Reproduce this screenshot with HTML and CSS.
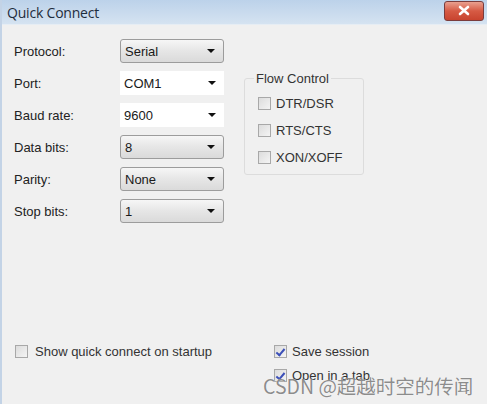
FILE: index.html
```html
<!DOCTYPE html>
<html lang="en">
<head>
	<meta charset="UTF-8" />
	<title>Quick Connect</title>
	<link rel="stylesheet" href="styles.css">
</head>
<body>
	<div class="window">
		<div class="titlebar">
			<span class="title">Quick Connect</span>
			<div class="close">
				<svg width="14" height="11" viewBox="0 0 14 11"><path d="M3 2 L11 9 M11 2 L3 9" stroke="#fff" stroke-width="2.6" stroke-linecap="round"/></svg>
			</div>
		</div>

		<div class="content">
			<div class="top">
				<div class="fields">
					<label>Protocol:</label>
					<div class="combo boxed">Serial<span class="arrow"></span></div>

					<label>Port:</label>
					<div class="combo">COM1<span class="arrow"></span></div>

					<label>Baud rate:</label>
					<div class="combo">9600<span class="arrow"></span></div>

					<label>Data bits:</label>
					<div class="combo boxed">8<span class="arrow"></span></div>

					<label>Parity:</label>
					<div class="combo boxed">None<span class="arrow"></span></div>

					<label>Stop bits:</label>
					<div class="combo boxed">1<span class="arrow"></span></div>
				</div>

				<fieldset class="flow">
					<legend>Flow Control</legend>
					<div class="check-row"><span class="box"></span>DTR/DSR</div>
					<div class="check-row"><span class="box"></span>RTS/CTS</div>
					<div class="check-row"><span class="box"></span>XON/XOFF</div>
				</fieldset>
			</div>

			<div class="bottom">
				<div class="col-left">
					<div class="check-row"><span class="box"></span>Show quick connect on startup</div>
				</div>
				<div class="col-right">
					<div class="check-row"><span class="box checked"></span>Save session</div>
					<div class="check-row"><span class="box checked"></span>Open in a tab</div>
				</div>
			</div>
		</div>

		<div class="watermark">CSDN @超越时空的传闻</div>
	</div>
</body>
</html>
```

FILE: styles.css
```css
body {
	margin: 0;
	font-family: "Liberation Sans", Arial, sans-serif;
	font-size: 13px;
	color: #222;
	background: #f0f0f0;
}

.window {
	position: relative;
	width: 487px;
	height: 404px;
	display: flex;
	flex-direction: column;
	border-left: 2px solid #c3d3e6;
	box-sizing: border-box;
	background: #f0f0f0;
	overflow: hidden;
}

.titlebar {
	height: 24px;
	display: flex;
	align-items: center;
	justify-content: space-between;
	padding: 0 3px 0 5px;
	background: linear-gradient(#bcd2ea, #cbdcee 60%, #d5e3f1);
	border-bottom: 1px solid #e6edf4;
}

.title {
	font-family: "Open Sans", "Liberation Sans", sans-serif;
	font-size: 14px;
	color: #1e2d3d;
	letter-spacing: -0.2px;
}

.close {
	width: 38px;
	height: 18px;
	margin-top: -3px;
	border: 1px solid #7a3c3c;
	border-radius: 3px;
	background: linear-gradient(#e9a08f, #d65a44 50%, #c8442f);
	display: flex;
	align-items: center;
	justify-content: center;
}

.content {
	flex: 1;
	display: flex;
	flex-direction: column;
	justify-content: space-between;
	padding: 14px 0 0 12px;
}

.top {
	display: flex;
	align-items: flex-start;
}

.fields {
	display: grid;
	grid-template-columns: 106px 104px;
	grid-auto-rows: 24px;
	row-gap: 8px;
	align-items: center;
}

.combo {
	height: 24px;
	box-sizing: border-box;
	display: flex;
	align-items: center;
	justify-content: space-between;
	padding: 0 8px 0 4px;
	background: #fff;
	color: #1a1a1a;
}

.combo.boxed {
	border: 1px solid #9c9c9c;
	border-radius: 3px;
	background: linear-gradient(#f6f6f6, #e6e6e6 50%, #dadada);
}

.arrow {
	width: 0;
	height: 0;
	border-left: 4px solid transparent;
	border-right: 4px solid transparent;
	border-top: 4px solid #111;
}

.flow {
	margin: 32px 0 0 20px;
	width: 120px;
	height: 104px;
	box-sizing: border-box;
	padding: 4px 0 0 13px;
	border: 1px solid #dcdcdc;
	border-radius: 3px;
}

.flow legend {
	padding: 0 2px;
	margin-left: -4px;
	color: #333;
}

.flow .check-row {
	height: 27px;
}

.check-row {
	display: flex;
	align-items: center;
	gap: 5px;
	color: #333;
}

.box {
	width: 13px;
	height: 13px;
	box-sizing: border-box;
	border: 1px solid #a8a8a8;
	background: linear-gradient(135deg, #dcdcdc, #f4f4f4);
	position: relative;
}

.box.checked::after {
	content: "";
	position: absolute;
	left: 3px;
	top: 1px;
	width: 3px;
	height: 7px;
	border-right: 2px solid #3b4fb8;
	border-bottom: 2px solid #3b4fb8;
	transform: rotate(40deg);
}

.bottom {
	display: flex;
	padding-bottom: 21px;
}

.col-left {
	flex: 0 0 260px;
}

.col-left .check-row {
	gap: 7px;
	margin-left: 1px;
}

.col-right {
	display: flex;
	flex-direction: column;
	gap: 9px;
}

.watermark {
	position: absolute;
	left: 261px;
	top: 371px;
	font-family: "Noto Sans CJK SC", "Liberation Sans", sans-serif;
	font-size: 19.5px;
	color: rgba(120, 120, 120, 0.85);
	text-shadow: 0 0 1px #fff;
}
```
